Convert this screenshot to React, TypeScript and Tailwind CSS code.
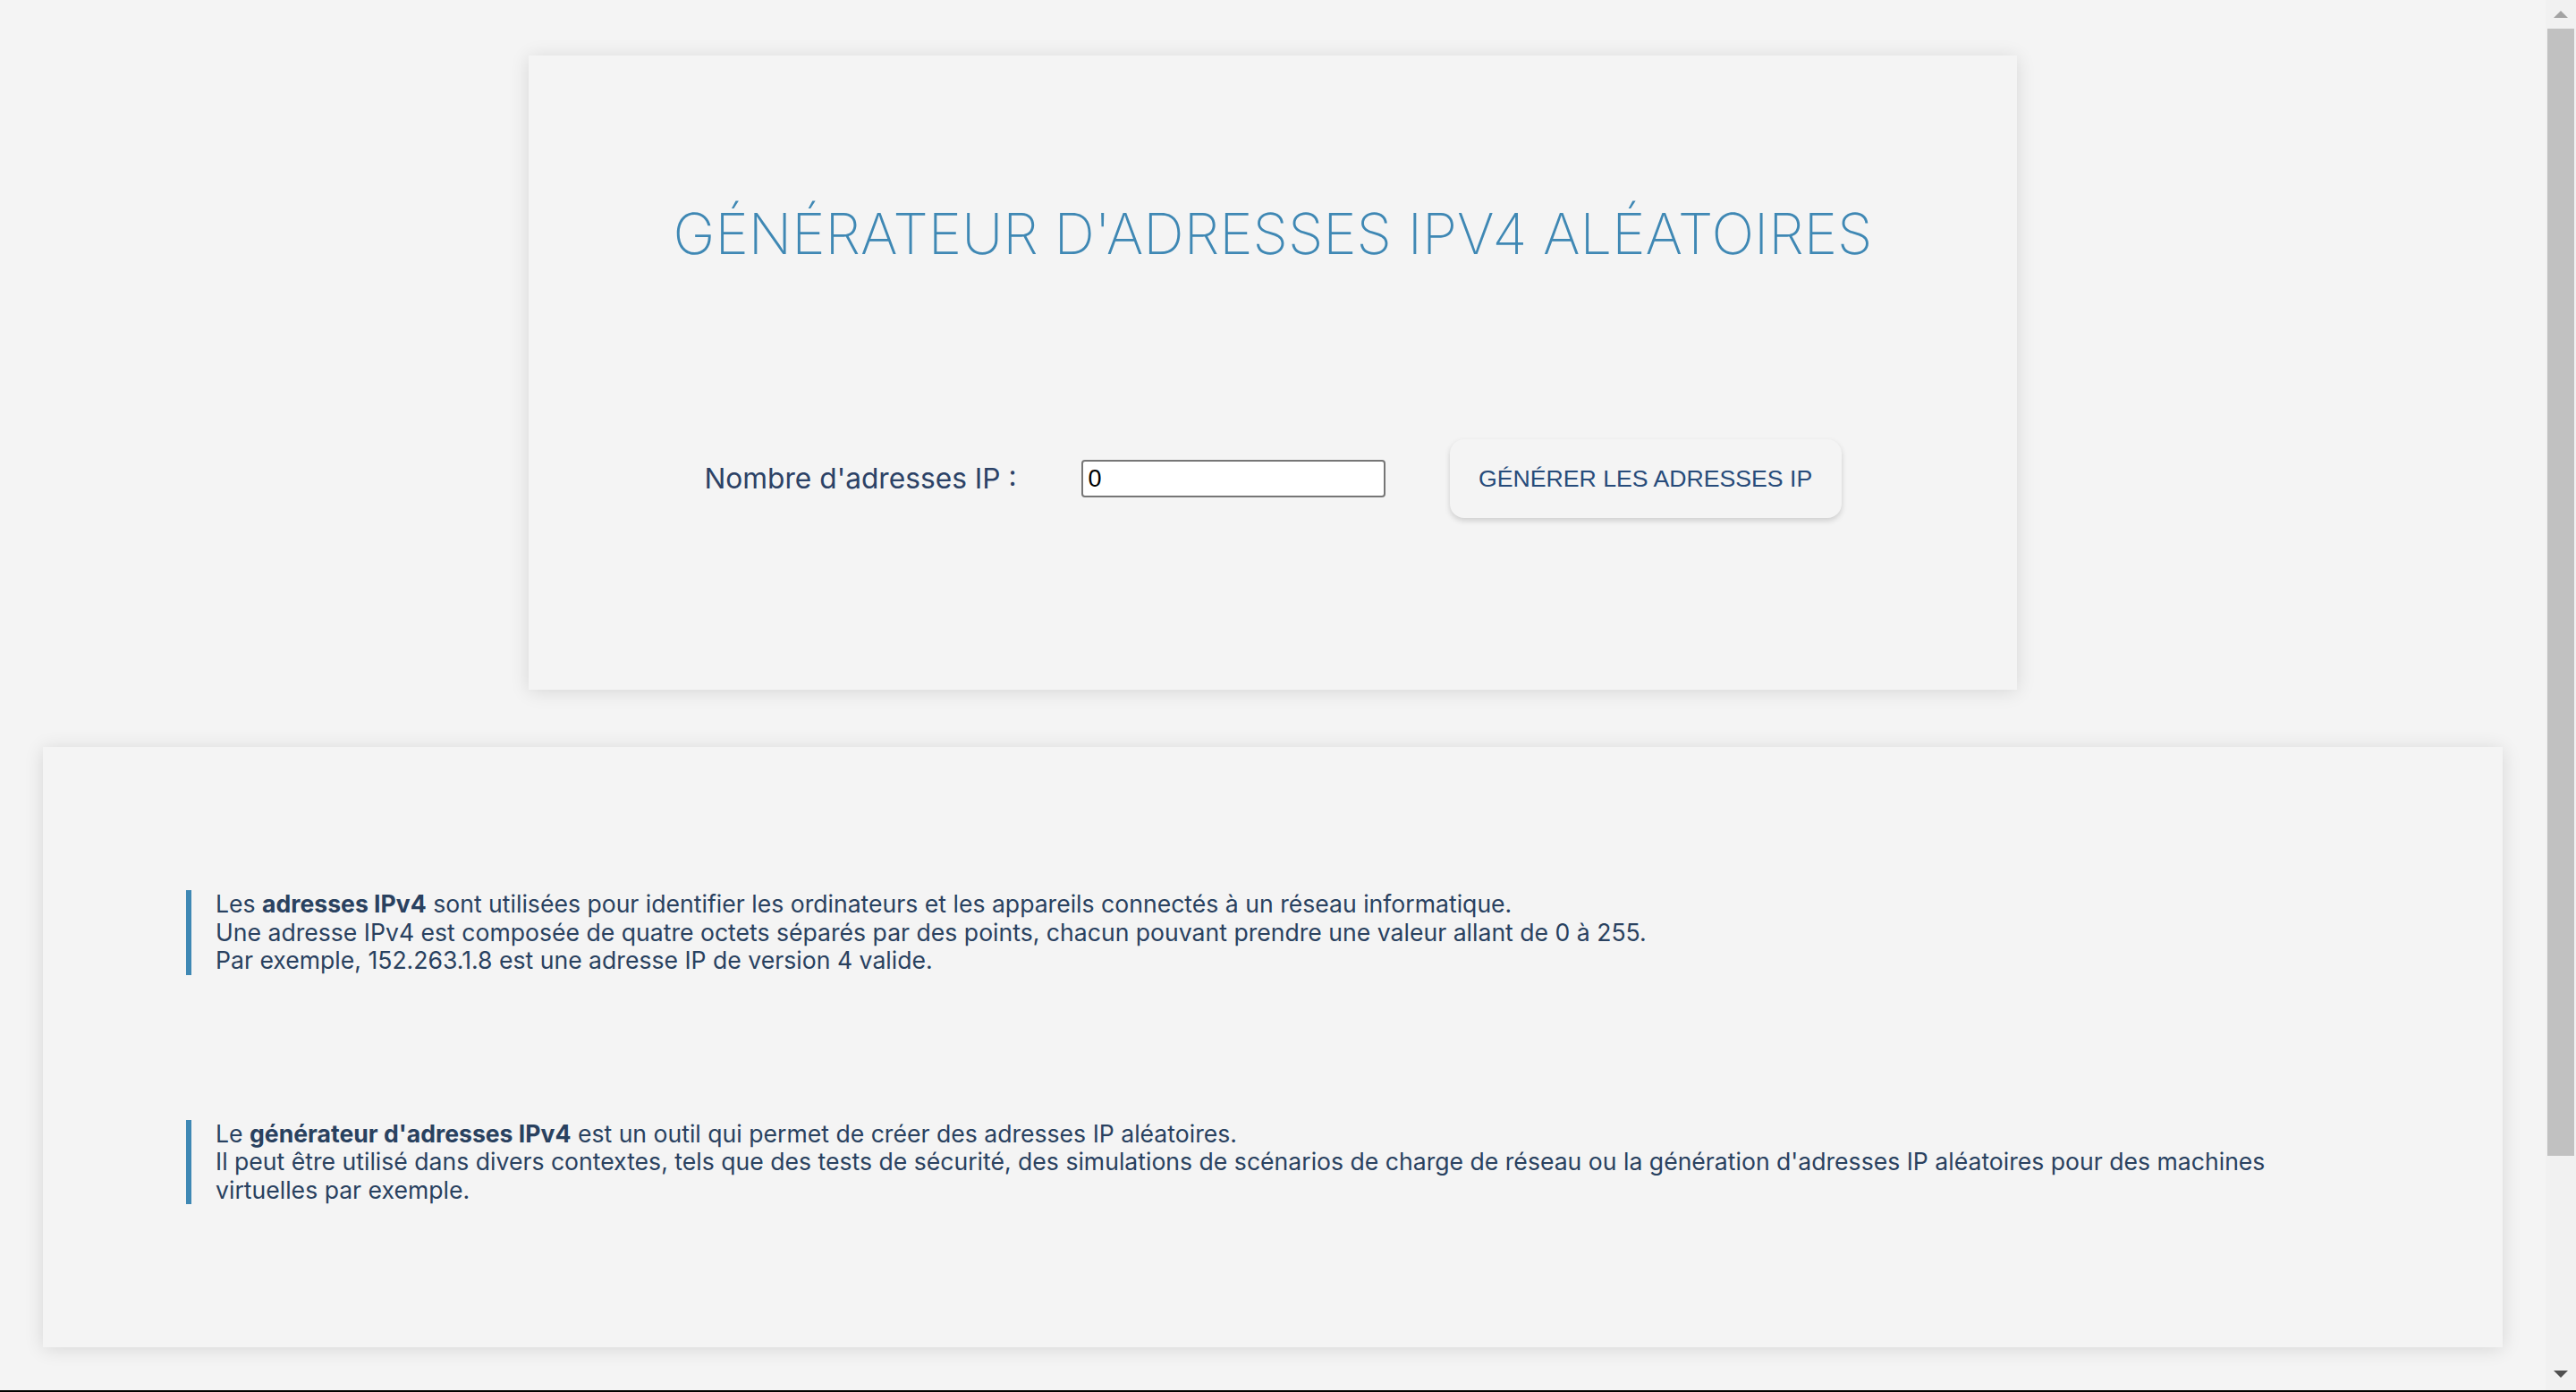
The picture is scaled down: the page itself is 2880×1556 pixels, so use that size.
import React from 'react';

const App: React.FC = () => {
  return (
    <div className="min-h-screen bg-[#f4f4f4] font-['Inter',sans-serif]">
      <div className="mr-[34px] pt-[62px] pb-[48px]">
        {/* generator card */}
        <div className="w-[1664px] mx-auto bg-[#f4f4f4] shadow-[0_2px_20px_rgba(0,0,0,0.12)] pt-[161px] pb-[192px]">
          <h1 className="text-center text-[63.3px] leading-[76px] font-extralight text-[#3f88b4]">
            GÉNÉRATEUR D'ADRESSES IPV4 ALÉATOIRES
          </h1>
          <div className="mt-[192px] flex items-center justify-center gap-[72px]">
            <label className="text-[31.7px] text-[#2c4266]">Nombre d'adresses IP :</label>
            <input
              type="number"
              defaultValue={0}
              className="w-[340px] h-[42px] bg-white border-2 border-[#767676] rounded-[4px] px-[6px] text-[27px] text-black font-['Liberation_Sans',Arial,sans-serif] [appearance:textfield]"
            />
            <button className="w-[438px] h-[88px] rounded-[16px] bg-[#f4f4f4] shadow-[0_3px_6px_rgba(0,0,0,0.16)] text-[26.67px] text-[#274b7a] font-['Liberation_Sans',Arial,sans-serif]">
              GÉNÉRER LES ADRESSES IP
            </button>
          </div>
        </div>

        {/* description card */}
        <div className="mx-[48px] mt-[64px] bg-[#f4f4f4] shadow-[0_2px_20px_rgba(0,0,0,0.12)] p-[160px] flex flex-col gap-[162px]">
          <p className="border-l-[6px] border-[#3f88b4] pl-[27px] text-[26.6px] leading-[31.5px] text-[#29415f]">
            Les <strong className="font-bold">adresses IPv4</strong> sont utilisées pour identifier les ordinateurs et les appareils connectés à un réseau informatique.
            <br />
            Une adresse IPv4 est composée de quatre octets séparés par des points, chacun pouvant prendre une valeur allant de 0 à 255.
            <br />
            Par exemple, 152.263.1.8 est une adresse IP de version 4 valide.
          </p>
          <p className="border-l-[6px] border-[#3f88b4] pl-[27px] text-[26.6px] leading-[31.5px] text-[#29415f]">
            Le <strong className="font-bold">générateur d'adresses IPv4</strong> est un outil qui permet de créer des adresses IP aléatoires.
            <br />
            Il peut être utilisé dans divers contextes, tels que des tests de sécurité, des simulations de scénarios de charge de réseau ou la génération d'adresses IP aléatoires pour des machines virtuelles par exemple.
          </p>
        </div>
      </div>

      {/* browser scrollbar */}
      <div className="fixed top-0 right-0 w-[34px] h-screen bg-[#f1f1f1] flex flex-col items-center">
        <div className="mt-[12px] w-0 h-0 border-x-[8px] border-x-transparent border-b-[8px] border-b-[#a3a3a3]" />
        <div className="mt-[12px] w-[30px] h-[1260px] bg-[#c1c1c1]" />
        <div className="mt-auto mb-[16px] w-0 h-0 border-x-[8px] border-x-transparent border-t-[8px] border-t-[#505050]" />
      </div>
      <div className="fixed bottom-0 left-0 right-0 h-[2px] bg-black" />
    </div>
  );
};

export default App;
